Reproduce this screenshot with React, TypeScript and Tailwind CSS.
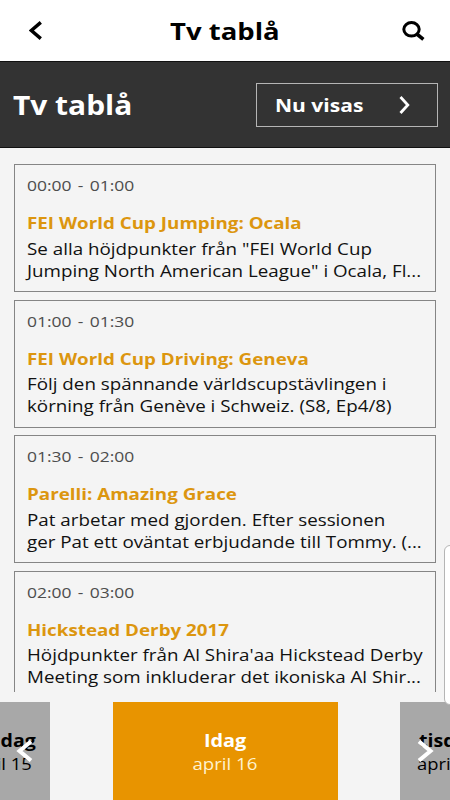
interface IProgram {
    time: string;
    title: string;
    lines: string[];
}

const programs: IProgram[] = [
    {
        time: "00:00 - 01:00",
        title: "FEI World Cup Jumping: Ocala",
        lines: ['Se alla höjdpunkter från "FEI World Cup', 'Jumping North American League" i Ocala, Fl...'],
    },
    {
        time: "01:00 - 01:30",
        title: "FEI World Cup Driving: Geneva",
        lines: ["Följ den spännande världscupstävlingen i", "körning från Genève i Schweiz. (S8, Ep4/8)"],
    },
    {
        time: "01:30 - 02:00",
        title: "Parelli: Amazing Grace",
        lines: ["Pat arbetar med gjorden. Efter sessionen", "ger Pat ett oväntat erbjudande till Tommy. (..."],
    },
    {
        time: "02:00 - 03:00",
        title: "Hickstead Derby 2017",
        lines: ["Höjdpunkter från Al Shira'aa Hickstead Derby", "Meeting som inkluderar det ikoniska Al Shir..."],
    },
];

const Header = () => (
    <header className="flex h-[61px] items-center justify-between bg-white pr-[25px] pl-[29px]">
        <svg width="13" height="19" viewBox="0 0 13 19" fill="none" stroke="#000" strokeWidth="3.4">
            <path d="M11.8 1.4 2.4 9.5 11.8 17.6" />
        </svg>
        <h1 className="ml-[5px] origin-center scale-x-[1.17] text-[23.5px] leading-[32px] font-bold text-black">Tv tablå</h1>
        <svg width="23" height="20" viewBox="0 0 23 20" fill="none" stroke="#000" strokeWidth="3">
            <ellipse cx="9.5" cy="8.3" rx="7.7" ry="6.7" />
            <path d="M14.8 13 21.4 18.3" strokeWidth="3.6" />
        </svg>
    </header>
);

const Banner = () => (
    <section className="flex h-[87px] items-center justify-between border-t border-b border-t-[#111] border-b-[#111] bg-[#333] pr-[12px] pl-[13px]">
        <h2 className="origin-left scale-x-[1.15] text-[26px] leading-[36px] font-bold text-white">Tv tablå</h2>
        <button className="flex h-[44px] w-[182px] items-center justify-between border border-[#b5b5b5] pr-[27px] pl-[18px]">
            <span className="origin-left scale-x-[1.168] text-[18px] leading-[24px] font-bold text-white">Nu visas</span>
            <svg width="11" height="18" viewBox="0 0 11 18" fill="none" stroke="#fff" strokeWidth="2.8">
                <path d="M1.5 1 8.8 9 1.5 17" />
            </svg>
        </button>
    </section>
);

const ProgramCard = ({ program }: { program: IProgram }) => (
    <article className="h-[128px] shrink-0 border border-[#858585] pt-[10px] pl-[12px] whitespace-nowrap">
        <p className="w-max origin-left scale-x-[1.165] text-[15px] leading-[20px] text-[#4d4d4d] [word-spacing:1.5px]">{program.time}</p>
        <h3 className="mt-[16px] w-max origin-left scale-x-[1.174] text-[16px] leading-[24px] font-bold text-[#dc960f]">{program.title}</h3>
        <div className="mt-[2.5px] text-[16.5px] leading-[22px] text-[#111]">
            {program.lines.map((line) => (
                <p key={line} className="w-max origin-left scale-x-[1.138]">{line}</p>
            ))}
        </div>
    </article>
);

const DayPicker = () => (
    <nav className="relative flex h-[98px] justify-between whitespace-nowrap">
        <div className="flex w-[50px] flex-col items-end overflow-hidden bg-[#a8a8a8] pt-[27px] pr-[14px] text-black">
            <span className="origin-right scale-x-[1.15] text-[17px] leading-[24px] font-bold">söndag</span>
            <span className="mr-[4px] origin-right scale-x-[1.15] text-[16px] leading-[22px]">april 15</span>
        </div>
        <div className="flex w-[225px] flex-col items-center bg-[#e89400] pt-[27px]">
            <span className="scale-x-[1.17] text-[17px] leading-[24px] font-bold text-white">Idag</span>
            <span className="scale-x-[1.165] text-[16px] leading-[22px] text-[#fff3cf]">april 16</span>
        </div>
        <div className="flex w-[50px] flex-col items-start overflow-hidden bg-[#a8a8a8] pt-[27px] pl-[19px] text-black">
            <span className="origin-left scale-x-[1.15] text-[17px] leading-[24px] font-bold">tisdag</span>
            <span className="-ml-[2px] origin-left scale-x-[1.15] text-[16px] leading-[22px]">april 17</span>
        </div>
        <svg className="absolute top-[38px] left-[16px]" width="17" height="22" viewBox="0 0 17 22" fill="none" stroke="#fff" strokeWidth="4">
            <path d="M15 1.5 3.5 11 15 20.5" />
        </svg>
        <svg className="absolute top-[38px] right-[16px]" width="17" height="22" viewBox="0 0 17 22" fill="none" stroke="#fff" strokeWidth="4">
            <path d="M2 1.5 13.5 11 2 20.5" />
        </svg>
    </nav>
);

const App = () => {
    return (
        <div className="relative flex h-[800px] w-[450px] flex-col overflow-hidden bg-[#f4f4f4] font-['Open_Sans',sans-serif]">
            <Header />
            <Banner />
            <main className="mb-[10px] flex h-[544px] flex-col gap-[7.5px] overflow-hidden pt-[16px] pr-[14px] pl-[14px]">
                {programs.map((program) => (
                    <ProgramCard key={program.time} program={program} />
                ))}
            </main>
            <DayPicker />
            {/* edge panel handle */}
            <div className="absolute top-[545px] left-[444px] h-[160px] w-[12px] rounded-[6px] border border-[#b5b5b5] bg-white" />
        </div>
    );
};

export default App;
